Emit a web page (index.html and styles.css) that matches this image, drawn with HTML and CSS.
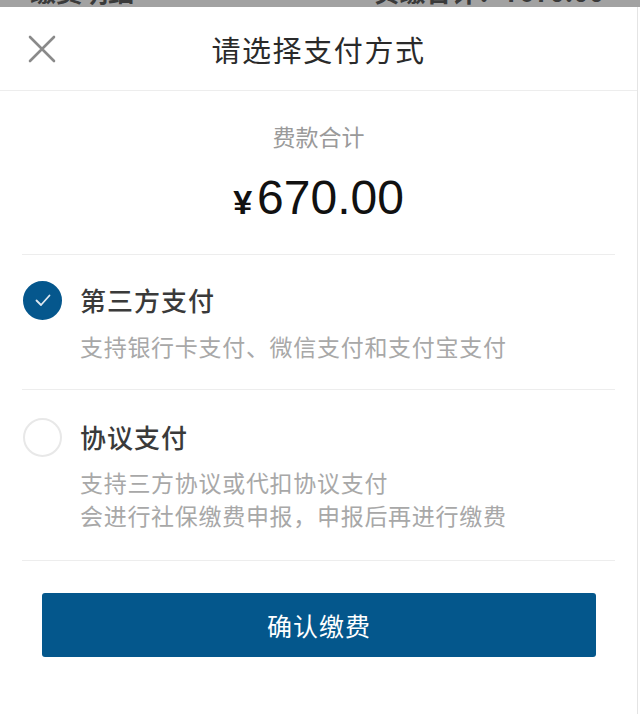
FILE: index.html
```html
<!DOCTYPE html>
<html lang="zh-CN">
<head>
<meta charset="utf-8">
<title>请选择支付方式</title>
<link rel="stylesheet" href="styles.css">
</head>
<body>
<div class="backdrop">
  <div class="backdrop-row">
    <span>缴费明细</span>
    <span>实缴合计：¥670.00</span>
  </div>
</div>
<div class="sheet">
  <header class="sheet-header">
    <button class="close" aria-label="关闭">
      <svg width="28" height="28" viewBox="0 0 28 28"><path d="M2 2 L26 26 M26 2 L2 26" stroke="#8a8a8a" stroke-width="2.6" stroke-linecap="round" fill="none"/></svg>
    </button>
    <h1 class="sheet-title">请选择支付方式</h1>
    <span></span>
  </header>
  <section class="summary">
    <div class="summary-label">费款合计</div>
    <div class="summary-amount"><span class="yen">¥</span><span class="num">670.00</span></div>
  </section>
  <div class="option">
    <span class="radio checked">
      <svg width="20" height="20" viewBox="0 0 20 20"><path d="M3.5 10.5 L8 15 L16.5 5.5" stroke="#dfe8f0" stroke-width="1.8" fill="none" stroke-linecap="round" stroke-linejoin="round"/></svg>
    </span>
    <div class="option-title">第三方支付</div>
    <div class="option-desc">支持银行卡支付、微信支付和支付宝支付</div>
  </div>
  <div class="option option-2">
    <span class="radio"></span>
    <div class="option-title">协议支付</div>
    <div class="option-desc">支持三方协议或代扣协议支付<br>会进行社保缴费申报，申报后再进行缴费</div>
  </div>
  <div class="actions">
    <button class="confirm">确认缴费</button>
  </div>
</div>
</body>
</html>
```
FILE: styles.css
```css
* { box-sizing: border-box; }
html, body { margin: 0; padding: 0; background: #fff; }
body {
  font-family: "Noto Sans CJK SC", "Noto Sans", sans-serif;
  color: #333;
  width: 640px;
  height: 714px;
  overflow: hidden;
}
.backdrop {
  height: 7px;
  background: #a2a2a2;
  overflow: hidden;
  width: 640px;
}
.backdrop-row {
  display: flex;
  justify-content: space-between;
  padding: 0 36px 0 30px;
  margin-top: -24px;
  font-size: 26px;
  line-height: 30px;
  color: #3a3a3a;
  font-weight: 700;
}
.sheet {
  width: 638px;
  height: 707px;
  background: #fff;
  border-right: 1px solid #e4e4e4;
}
.sheet-header {
  height: 84px;
  border-bottom: 1px solid #ededed;
  display: grid;
  grid-template-columns: 1fr auto 1fr;
  align-items: center;
  padding: 0 0 0 28px;
}
.close {
  border: 0;
  background: none;
  padding: 0;
  width: 28px;
  height: 28px;
  display: flex;
}
.sheet-title {
  margin: 0;
  font-size: 29px;
  font-weight: 400;
  color: #2a2a2a;
  line-height: 40px;
  letter-spacing: 1.6px;
  margin-left: -28px;
}
.summary {
  margin: 0 22px 0 22px;
  border-bottom: 1px solid #ededed;
  padding: 29px 0 28px;
  display: flex;
  flex-direction: column;
  align-items: center;
}
.summary-label {
  font-size: 23px;
  line-height: 32px;
  color: #9a9a9a;
}
.summary-amount {
  margin-top: 18px;
  height: 56px;
  display: flex;
  align-items: baseline;
  color: #111;
}
.yen {
  font-family: "Liberation Sans", sans-serif;
  font-size: 34px;
  font-weight: 700;
  margin-right: 5px;
  line-height: 56px;
}
.num {
  font-family: "Liberation Sans", sans-serif;
  font-size: 48px;
  line-height: 56px;
}
.option {
  margin: 0 22px;
  border-bottom: 1px solid #ededed;
  padding: 25px 0 26px 1px;
  display: grid;
  grid-template-columns: 39px 1fr;
  column-gap: 18px;
  row-gap: 10px;
  align-items: center;
}
.option-2 {
  padding: 27px 0 28px 1px;
  row-gap: 9px;
}
.radio {
  width: 39px;
  height: 39px;
  border-radius: 50%;
  border: 2px solid #e8e8e8;
  display: flex;
  align-items: center;
  justify-content: center;
}
.radio.checked {
  background: #05578d;
  border-color: #05578d;
}
.option-title {
  font-size: 26px;
  line-height: 40px;
  color: #3a3a3a;
  font-weight: 500;
  letter-spacing: 1px;
}
.option-desc {
  grid-column: 2;
  font-size: 23px;
  line-height: 33px;
  color: #a8a8a8;
  letter-spacing: 0.7px;
}
.actions {
  padding: 32px 0 0 42px;
}
.confirm {
  display: block;
  width: 554px;
  height: 64px;
  border: 0;
  border-radius: 3px;
  background: #04578c;
  color: #fff;
  font-family: "Noto Sans CJK SC", sans-serif;
  font-size: 25px;
  letter-spacing: 1px;
}
```
